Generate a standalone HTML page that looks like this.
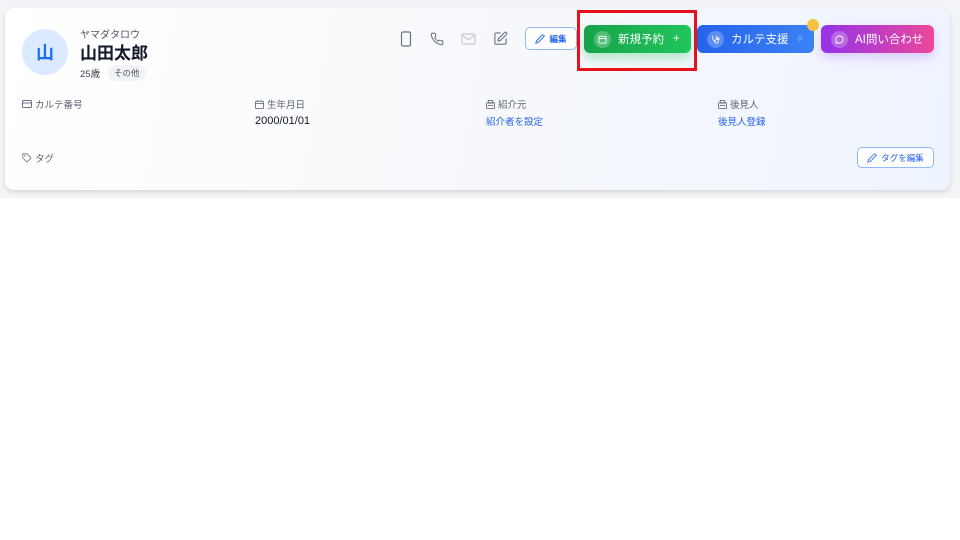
<!DOCTYPE html>
<html><head><meta charset="utf-8"><style>
*{box-sizing:border-box;margin:0;padding:0}
body{width:960px;height:540px;background:#fff;font-family:"Liberation Sans","Noto Sans CJK JP",sans-serif;position:relative;overflow:hidden}
.bg{position:absolute;left:0;top:0;width:960px;height:198px;background:#f3f4f7}
.card{position:absolute;left:5px;top:8px;width:945px;height:182px;border-radius:9px;background:linear-gradient(100deg,#ffffff 0%,#f8f9fc 45%,#eef4fe 100%);box-shadow:0 2px 5px rgba(0,0,0,.12)}
.abs{position:absolute}
.av{left:17px;top:21px;width:46px;height:46px;border-radius:50%;background:#dbeafe;color:#1d6ff2;font-size:18px;font-weight:bold;display:flex;align-items:center;justify-content:center}
.kana{left:75px;top:18px;font-size:10px;color:#4b5563}
.name{left:75px;top:31px;font-size:17px;font-weight:bold;color:#111827}
.age{left:75px;top:58px;font-size:9.5px;color:#374151}
.chip{left:103px;top:57px;font-size:8.5px;color:#4b5563;background:#f1f3f6;border-radius:8px;padding:2px 6px}
.lbl{font-size:9.5px;color:#5b6370;display:flex;align-items:center;gap:3px}
.val{font-size:11px;color:#111827}
.link{font-size:9.5px;color:#2563eb}
.btn{height:28px;border-radius:6px;color:#fff;font-size:11.5px;font-weight:normal;display:flex;align-items:center;gap:7px;padding-left:10px}
.ic{width:17px;height:17px;border-radius:50%;background:rgba(255,255,255,.25);display:flex;align-items:center;justify-content:center}
.ob{border:1px solid #93b8f8;border-radius:5px;background:#fff;color:#2563eb;font-size:8.5px;display:flex;align-items:center;justify-content:center;gap:4px;font-weight:bold}
</style></head><body>
<div class="bg"></div>
<div class="card">
<div class="abs av">山</div>
<div class="abs kana">ヤマダタロウ</div>
<div class="abs name">山田太郎</div>
<div class="abs age">25歳</div>
<div class="abs chip">その他</div>

<svg class="abs" style="left:395px;top:23px" width="12" height="16" viewBox="0 0 12 16" fill="none" stroke="#6b7280" stroke-width="1.2"><rect x="1.5" y="1" width="9" height="14" rx="1.5"/></svg>
<svg class="abs" style="left:425px;top:24px" width="14" height="14" viewBox="0 0 24 24" fill="none" stroke="#6b7280" stroke-width="1.8"><path d="M22 16.9v3a2 2 0 0 1-2.2 2 19.8 19.8 0 0 1-8.6-3.1 19.5 19.5 0 0 1-6-6A19.8 19.8 0 0 1 2.1 4.2 2 2 0 0 1 4.1 2h3a2 2 0 0 1 2 1.7c.1 1 .4 1.9.7 2.8a2 2 0 0 1-.5 2.1L8 9.9a16 16 0 0 0 6 6l1.3-1.3a2 2 0 0 1 2.1-.4c.9.3 1.8.6 2.8.7a2 2 0 0 1 1.7 2z"/></svg>
<svg class="abs" style="left:456px;top:25px" width="15" height="12" viewBox="0 0 15 12" fill="none" stroke="#c7cbd2" stroke-width="1.2"><rect x="1" y="1" width="13" height="10" rx="1.5"/><path d="M1 2l6.5 5L14 2"/></svg>
<svg class="abs" style="left:488px;top:23px" width="15" height="15" viewBox="0 0 24 24" fill="none" stroke="#6b7280" stroke-width="1.8"><path d="M12 3H5a2 2 0 0 0-2 2v14a2 2 0 0 0 2 2h14a2 2 0 0 0 2-2v-7"/><path d="M18.4 2.6a2.1 2.1 0 0 1 3 3L12 15l-4 1 1-4z"/></svg>

<div class="abs ob" style="left:520px;top:19px;width:52px;height:23px"><svg width="10" height="10" viewBox="0 0 24 24" fill="none" stroke="#2563eb" stroke-width="2.2"><path d="M17 3a2.8 2.8 0 1 1 4 4L7.5 20.5 2 22l1.5-5.5z"/></svg>編集</div>

<div class="abs btn" style="left:579px;top:17px;width:107px;background:linear-gradient(90deg,#16a34a,#22c55e);box-shadow:0 6px 10px rgba(34,197,94,.3)"><span class="ic"><svg width="9" height="9" viewBox="0 0 10 10" fill="none" stroke="#fff" stroke-width="1"><rect x="1" y="1.5" width="8" height="7.5" rx="1"/><path d="M1 4h8"/></svg></span>新規予約 <span style="margin-left:2px">+</span></div>
<div class="abs" style="left:572px;top:2px;width:120px;height:61px;border:3px solid #e8101a"></div>

<div class="abs btn" style="left:692px;top:17px;width:117px;background:linear-gradient(90deg,#2563eb,#3b82f6)"><span class="ic"><svg width="9" height="9" viewBox="0 0 10 10" fill="none" stroke="#fff" stroke-width="1"><path d="M2 1v3a2 2 0 0 0 4 0V1M4 6v1a2 2 0 0 0 4 0V5"/><circle cx="8" cy="4" r="1"/></svg></span>カルテ支援 <span style="color:#93c5fd;font-size:10px">✧</span></div>
<div class="abs" style="left:802px;top:11px;width:12px;height:12px;border-radius:50%;background:#f5c242"></div>

<div class="abs btn" style="left:816px;top:17px;width:113px;background:linear-gradient(90deg,#9333ea,#ec4899);box-shadow:0 5px 10px rgba(168,85,247,.25)"><span class="ic"><svg width="9" height="9" viewBox="0 0 10 10" fill="none" stroke="#fff" stroke-width="1"><path d="M5 1a4 4 0 1 1-2 7.5L1 9l.5-2A4 4 0 0 1 5 1z"/></svg></span>AI問い合わせ</div>

<div class="abs lbl" style="left:17px;top:89px"><svg width="10" height="8" viewBox="0 0 10 8" fill="none" stroke="#6b7280"><rect x=".5" y=".5" width="9" height="7" rx="1"/><path d="M.5 3h9"/></svg>カルテ番号</div>
<div class="abs lbl" style="left:250px;top:89px"><svg width="9" height="9" viewBox="0 0 10 10" fill="none" stroke="#6b7280"><rect x=".5" y="1.5" width="9" height="8" rx="1"/><path d="M.5 4h9M3 0v2M7 0v2"/></svg>生年月日</div>
<div class="abs val" style="left:250px;top:107px">2000/01/01</div>
<div class="abs lbl" style="left:481px;top:89px"><svg width="9" height="9" viewBox="0 0 10 10" fill="none" stroke="#6b7280"><rect x=".5" y="3" width="9" height="6.5" rx="1"/><rect x="2.5" y=".5" width="5" height="3"/><path d="M2 6h6"/></svg>紹介元</div>
<div class="abs link" style="left:481px;top:106px">紹介者を設定</div>
<div class="abs lbl" style="left:713px;top:89px"><svg width="9" height="9" viewBox="0 0 10 10" fill="none" stroke="#6b7280"><rect x=".5" y="3" width="9" height="6.5" rx="1"/><rect x="2.5" y=".5" width="5" height="3"/><path d="M2 6h6"/></svg>後見人</div>
<div class="abs link" style="left:713px;top:106px">後見人登録</div>
<div class="abs lbl" style="left:17px;top:143px"><svg width="10" height="10" viewBox="0 0 24 24" fill="none" stroke="#6b7280" stroke-width="2"><path d="M20.6 13.4l-7.2 7.2a2 2 0 0 1-2.8 0L2 12V2h10l8.6 8.6a2 2 0 0 1 0 2.8z"/><circle cx="7" cy="7" r="1"/></svg>タグ</div>
<div class="abs ob" style="left:852px;top:139px;width:77px;height:21px;font-weight:normal"><svg width="10" height="10" viewBox="0 0 24 24" fill="none" stroke="#2563eb" stroke-width="2"><path d="M17 3a2.8 2.8 0 1 1 4 4L7.5 20.5 2 22l1.5-5.5z"/></svg>タグを編集</div>
</div>
</body></html>
